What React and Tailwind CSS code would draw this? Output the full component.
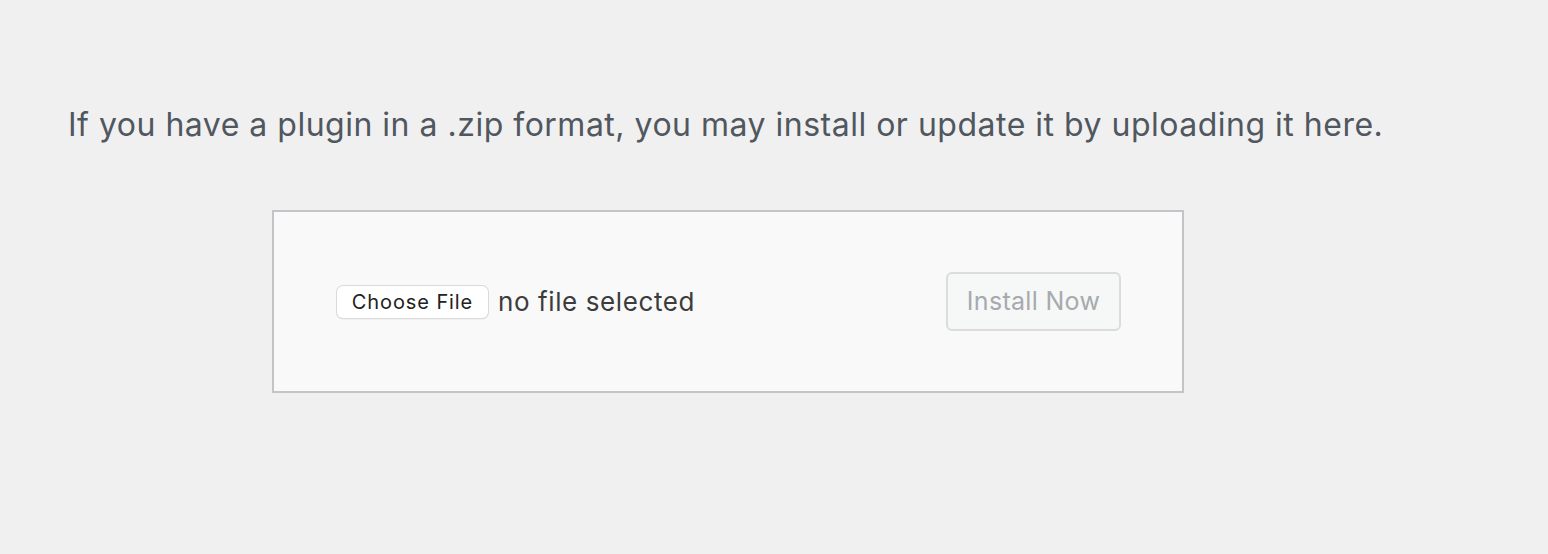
import React from 'react';

export default function App() {
    return (
        <div
            className="min-h-[554px] w-full bg-[#f0f0f1] pl-[68px] pt-[100px]"
            style={{ fontFamily: 'Inter, "Noto Sans", sans-serif' }}
        >
            <p className="text-[32px] leading-[50px] text-[#50575e] tracking-[0.5px]">
                If you have a plugin in a .zip format, you may install or update it by uploading it here.
            </p>

            <form
                className="mt-[60px] ml-[204px] flex h-[183px] w-[912px] items-center justify-between border-2 border-[#c3c4c7] bg-[#f9f9f9] pl-[63px] pr-[61px]"
                onSubmit={(e) => e.preventDefault()}
            >
                <div className="flex items-center">
                    <button
                        type="button"
                        className="h-[32px] w-[151px] rounded-[6px] bg-white text-[20px] leading-none tracking-[0.9px] text-[#222] shadow-[0_0_0_1px_#dadada,0_1px_2px_rgba(0,0,0,0.12)]"
                    >
                        Choose File
                    </button>
                    <span className="ml-[10px] text-[26px] leading-none tracking-[0.6px] text-[#3c3c3c]">no file selected</span>
                </div>
                <button
                    type="button"
                    disabled
                    className="h-[59px] w-[175px] rounded-[6px] border-2 border-[#dcdcde] bg-[#f6f7f7] text-[25px] tracking-[0.3px] text-[#a7aaad]"
                >
                    Install Now
                </button>
            </form>
        </div>
    );
}
